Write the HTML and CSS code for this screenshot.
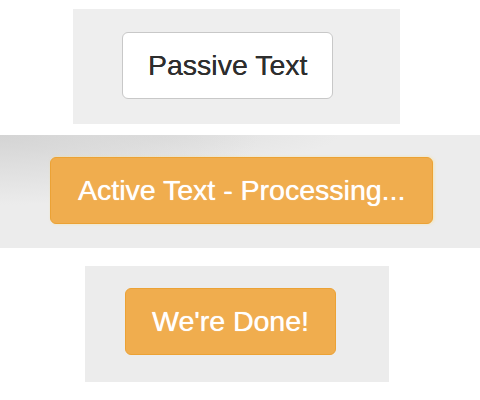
FILE: index.html
```html
<!DOCTYPE html>
<html lang="en">
<head>
<meta charset="utf-8">
<title>Button states</title>
<link rel="stylesheet" href="styles.css">
</head>
<body>
<main class="stage">
  <section class="panel panel-passive">
    <button class="btn btn-default" type="button">Passive Text</button>
  </section>
  <section class="panel panel-active">
    <button class="btn btn-warning btn-glow" type="button">Active Text - Processing...</button>
  </section>
  <section class="panel panel-done">
    <button class="btn btn-warning" type="button">We're Done!</button>
  </section>
</main>
</body>
</html>
```
FILE: styles.css
```css
html, body {
  margin: 0;
  padding: 0;
  background: #ffffff;
}
body {
  font-family: "Liberation Sans", Arial, Helvetica, sans-serif;
  width: 480px;
  height: 400px;
  overflow: hidden;
}
.stage {
  display: flex;
  flex-direction: column;
  align-items: flex-start;
  padding-top: 9px;
}
.panel {
  box-sizing: border-box;
  background: #ececec;
  display: flex;
  align-items: flex-start;
}
.panel-passive {
  margin-left: 73px;
  width: 327px;
  height: 115px;
  padding: 23px 0 0 49px;
  background: #eeeeee;
}
.panel-active {
  margin-top: 11px;
  width: 480px;
  height: 113px;
  padding: 22px 0 0 50px;
  background:
    radial-gradient(ellipse 260px 70px at 0px 0px, #d4d4d4 0%, rgba(236,236,236,0) 100%),
    radial-gradient(ellipse 180px 30px at 160px 0px, rgba(215,215,215,0.6) 0%, rgba(236,236,236,0) 100%),
    #ececec;
}
.panel-done {
  margin-top: 18px;
  margin-left: 85px;
  width: 304px;
  height: 116px;
  padding: 22px 0 0 40px;
}
.btn {
  font-family: inherit;
  font-size: 28.5px;
  line-height: 33px;
  padding: 16px 25px;
  border-radius: 6px;
  border: 1px solid transparent;
  cursor: pointer;
  white-space: nowrap;
  margin: 0;
}
.btn-default {
  background: #ffffff;
  color: #2e2e2e;
  border-color: #c8c8c8;
  text-shadow: 0 0 0.4px #2e2e2e;
}
.btn-warning {
  background: #f0ad4e;
  color: #ffffff;
  border-color: #eca235;
  padding: 16px 26px;
  text-shadow: 0 0 0.8px #ffffff;
}
.btn-glow {
  padding: 16px 27px;
  box-shadow: 1px 0 3px rgba(250, 225, 150, 0.7);
}
```
